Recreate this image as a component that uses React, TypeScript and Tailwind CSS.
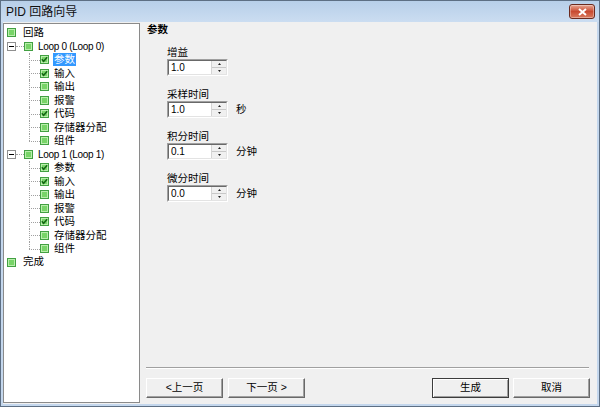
import React from "react";

type Child = { label: string; checked: boolean };

const CHILDREN: Child[] = [
  { label: "参数", checked: true },
  { label: "输入", checked: true },
  { label: "输出", checked: false },
  { label: "报警", checked: false },
  { label: "代码", checked: true },
  { label: "存储器分配", checked: false },
  { label: "组件", checked: false },
];

function Check({ checked }: { checked?: boolean }) {
  return (
    <svg width="9" height="9" viewBox="0 0 9 9" className="shrink-0">
      <rect x="0.5" y="0.5" width="8" height="8" fill="#b9eeac" stroke="#42a042" />
      <rect x="2" y="2" width="5" height="5" fill="#78d468" />
      {checked ? <path d="M1.8 4.3 L3.6 6.3 L7.2 2.2" stroke="#146614" strokeWidth="1.5" fill="none" /> : null}
    </svg>
  );
}

function Minus() {
  return (
    <svg width="9" height="9" viewBox="0 0 9 9" className="shrink-0">
      <rect x="0.5" y="0.5" width="8" height="8" fill="#ffffff" stroke="#8f8f8f" />
      <path d="M2 4.5 H7" stroke="#000000" strokeWidth="1" />
    </svg>
  );
}

function TreeLoop({ index, selected }: { index: number; selected?: string }) {
  return (
    <>
      <div className="flex h-[13.5px] items-center">
        <div className="w-[3px]" />
        <Minus />
        <div className="w-[8px] border-t border-dotted border-[#a0a0a0]" />
        <Check />
        <span className="ml-[5px] text-[10px] tracking-[-0.3px]">
          Loop {index} (Loop {index})
        </span>
      </div>
      {CHILDREN.map((child, i) => {
        const last = i === CHILDREN.length - 1;
        const isSel = selected === child.label;
        return (
          <div key={child.label} className="flex h-[13.5px] items-center">
            <div className="w-[25px]" />
            <div className="relative h-full w-[11px]">
              <span
                className={
                  last
                    ? "absolute left-0 top-0 h-1/2 border-l border-dotted border-[#a0a0a0]"
                    : "absolute left-0 top-0 h-full border-l border-dotted border-[#a0a0a0]"
                }
              />
              <span className="absolute left-0 top-1/2 w-full border-t border-dotted border-[#a0a0a0]" />
            </div>
            <Check checked={child.checked} />
            <span
              className={
                isSel
                  ? "ml-[4px] bg-[#3399ff] px-[1px] leading-[13px] text-white"
                  : "ml-[4px] px-[1px] leading-[13px]"
              }
            >
              {child.label}
            </span>
          </div>
        );
      })}
    </>
  );
}

function Spinner() {
  return (
    <div className="flex w-[15px] flex-col border-l border-[#d4d4d4] bg-[#f0f0f0]">
      <div className="flex flex-1 items-center justify-center border-b border-[#c8c8c8]">
        <svg width="3" height="2" viewBox="0 0 3 2">
          <path d="M0 2 L1.5 0 L3 2 Z" fill="#222" />
        </svg>
      </div>
      <div className="flex flex-1 items-center justify-center">
        <svg width="3" height="2" viewBox="0 0 3 2">
          <path d="M0 0 L1.5 2 L3 0 Z" fill="#222" />
        </svg>
      </div>
    </div>
  );
}

function Field({ label, value, unit }: { label: string; value: string; unit?: string }) {
  return (
    <div>
      <div className="h-[13px] leading-[13px]">{label}</div>
      <div className="flex items-center">
        <div className="border border-b-white border-l-[#a0a0a0] border-r-white border-t-[#a0a0a0]">
          <div className="flex h-[15px] w-[59px] border border-b-[#e3e3e3] border-l-[#696969] border-r-[#e3e3e3] border-t-[#696969] bg-white">
            <div className="flex-1 pl-[2px] text-[10px] leading-[13px]">{value}</div>
            <Spinner />
          </div>
        </div>
        {unit ? <span className="ml-[8px]">{unit}</span> : null}
      </div>
    </div>
  );
}

function Btn({ children, primary }: { children: React.ReactNode; primary?: boolean }) {
  return (
    <button
      type="button"
      className={
        primary
          ? "h-[20px] w-[77px] border border-[#3c3c3c] bg-[#f0f0f0] shadow-[inset_1px_1px_0_#ffffff,inset_-1px_-1px_0_#a0a0a0] text-[10.5px]"
          : "h-[20px] w-[77px] border border-b-[#696969] border-l-white border-r-[#696969] border-t-white bg-[#f0f0f0] shadow-[inset_-1px_-1px_0_#a0a0a0] text-[10.5px]"
      }
    >
      {children}
    </button>
  );
}

export default function App() {
  return (
    <div className="flex h-[407px] w-[600px] flex-col border border-[#5d6f84] bg-[#c4d7ed] font-['Liberation_Sans','Noto_Sans_CJK_SC',sans-serif] text-[10.5px] text-black">
      {/* title bar */}
      <div className="flex h-[21px] shrink-0 items-center justify-between bg-gradient-to-b from-[#b7cfe9] to-[#cbddf1] pl-[5px] pr-[4px]">
        <span className="text-[12px] text-[#111]">PID 回路向导</span>
        <div className="flex h-[15px] w-[26px] items-center justify-center rounded-[3px] border border-[#6b2a1e] bg-gradient-to-b from-[#e6a592] via-[#c84a31] to-[#d97a5e] shadow-[inset_0_0_0_1px_rgba(255,255,255,0.35)]">
          <svg width="9" height="8" viewBox="0 0 9 8">
            <path d="M1 1 L8 7 M8 1 L1 7" stroke="#ffffff" strokeWidth="2" />
          </svg>
        </div>
      </div>

      {/* body */}
      <div className="mx-[2px] mb-[2px] flex flex-1 bg-[#f0f0f0]">
        <div className="my-[1px] w-[137px] shrink-0 border border-[#8a8a8a] bg-white pt-[2px]">
          <div className="flex h-[13.5px] items-center">
            <div className="w-[3px]" />
            <Check />
            <span className="ml-[7px]">回路</span>
          </div>
          <TreeLoop index={0} selected="参数" />
          <TreeLoop index={1} />
          <div className="flex h-[13.5px] items-center">
            <div className="w-[3px]" />
            <Check />
            <span className="ml-[7px]">完成</span>
          </div>
        </div>

        <div className="flex flex-1 flex-col pb-[6px] pl-[6px] pr-[7px]">
          <div className="h-[14px] pl-[1px] pt-[1px] font-bold leading-[13px]">参数</div>
          <div className="ml-[21px] mt-[10px] flex flex-col gap-[12px]">
            <Field label="增益" value="1.0" />
            <Field label="采样时间" value="1.0" unit="秒" />
            <Field label="积分时间" value="0.1" unit="分钟" />
            <Field label="微分时间" value="0.0" unit="分钟" />
          </div>
          <div className="flex-1" />
          <div className="mr-[1px] border-b border-t border-b-white border-t-[#a0a0a0]" />
          <div className="mt-[9px] flex items-center justify-between">
            <div className="flex gap-[5px]">
              <Btn>&lt;上一页</Btn>
              <Btn>下一页 &gt;</Btn>
            </div>
            <div className="flex gap-[4px]">
              <Btn primary>生成</Btn>
              <Btn>取消</Btn>
            </div>
          </div>
        </div>
      </div>
    </div>
  );
}
